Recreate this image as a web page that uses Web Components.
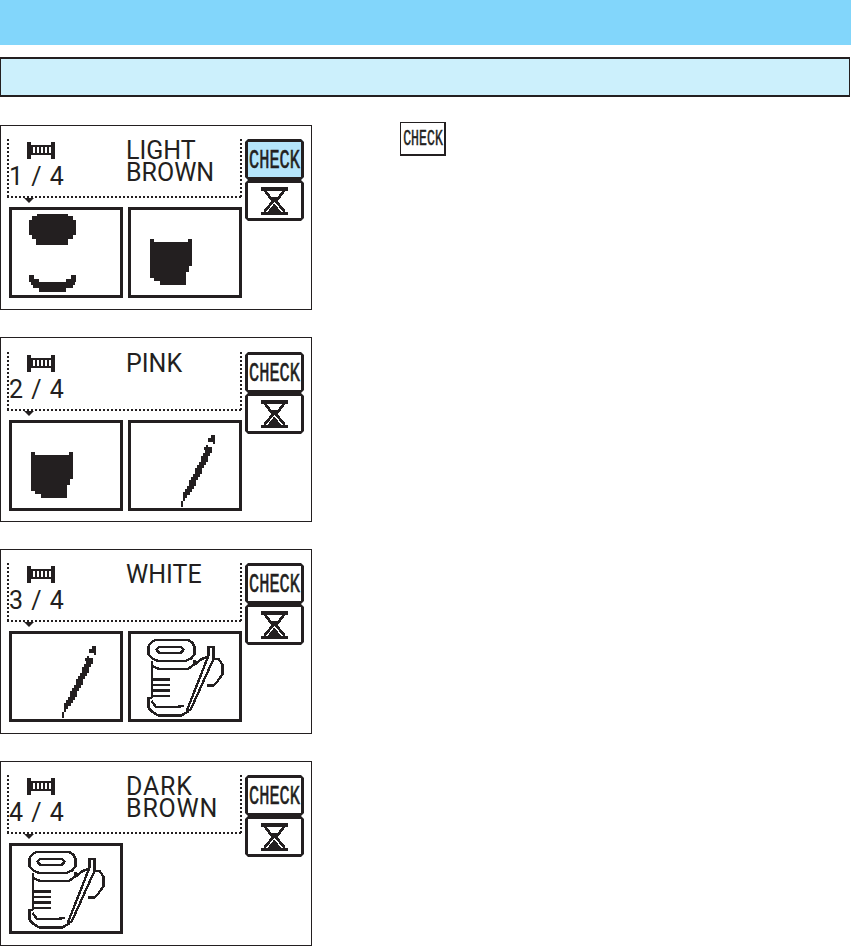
<!DOCTYPE html>
<html lang="en">
<head>
<meta charset="utf-8">
<title>Check</title>
<style>
  html, body { margin: 0; background: #fff; }
</style>
</head>
<body>
<manual-page>
  <check-key slot="hint"></check-key>
  <lcd-panel step="1 / 4" active>
    <span slot="name">LIGHT<br>BROWN</span>
    <thumb-box slot="thumbs" icon="spool-top"></thumb-box>
    <thumb-box slot="thumbs" icon="cup"></thumb-box>
  </lcd-panel>
  <lcd-panel step="2 / 4" style="--top: 14px">
    <span slot="name">PINK</span>
    <thumb-box slot="thumbs" icon="cup"></thumb-box>
    <thumb-box slot="thumbs" icon="needle"></thumb-box>
  </lcd-panel>
  <lcd-panel step="3 / 4">
    <span slot="name">WHITE</span>
    <thumb-box slot="thumbs" icon="needle"></thumb-box>
    <thumb-box slot="thumbs" icon="spool"></thumb-box>
  </lcd-panel>
  <lcd-panel step="4 / 4">
    <span slot="name" style="letter-spacing: .8px">DARK<br>BROWN</span>
    <thumb-box slot="thumbs" icon="spool"></thumb-box>
  </lcd-panel>
</manual-page>

<script>
// pixel art helper: [y0, y1, x0, x1] rows to a path, coords are 3x zoom units
const rowsToPath = (rows, ox, oy) =>
  rows.map(([y0, y1, x0, x1]) =>
    `M${x0 - ox} ${y0 - oy}H${x1 - ox}V${y1 - oy}H${x0 - ox}Z`).join("");

// needle body, snapped to the 6 unit (2px) lcd grid
const needleRows = () => {
  const rows = [[60, 68, 270, 282], [68, 80, 262, 282], [80, 88, 276, 282], [90, 96, 255, 262], [96, 105, 250, 275]];
  for (let y = 105; y < 268; y += 9) {
    const cx = 183 + (262 - y) * 0.5;
    const w = y > 248 ? 6 : y > 232 ? 12 : 21;
    const x0 = Math.round((cx - w / 2) / 6) * 6;
    rows.push([y, y + 9, x0, x0 + w]);
  }
  return rows;
};

const ICONS = {
  "spool-top": `<path fill="#231f20" d="${rowsToPath([
    [282, 290, 110, 205], [290, 300, 97, 218], [300, 345, 88, 228],
    [345, 358, 97, 218], [358, 375, 108, 205],
    [465, 478, 88, 103], [465, 478, 213, 228],
    [478, 488, 88, 118], [478, 488, 198, 228],
    [488, 497, 92, 225], [497, 506, 100, 218], [506, 516, 118, 198],
  ], 36, 271)}"/>`,
  cup: `<path fill="#231f20" d="${rowsToPath([
    [357, 366, 450, 462], [357, 366, 564, 576], [366, 440, 450, 576],
    [440, 458, 450, 567], [458, 475, 450, 558], [475, 485, 462, 558],
    [485, 495, 480, 558],
  ], 393, 271)}"/>`,
  needle: `<path fill="#231f20" d="${rowsToPath(needleRows(), 31, 24)}"/>`,
  spool: `<g transform="translate(42 6)" fill="none" stroke="#231f20" stroke-width="7">
    <path d="M30 12H130L142 20L148 32V55L138 68L120 75H40L22 68L10 55V32L18 20Z"/>
    <path d="M42 32H108L116 41L108 50H42L34 41Z"/>
    <path d="M20 75V185M22 90L40 98H130L148 85V72"/>
    <path d="M22 130H75M22 147H75M22 163H75M22 180H75"/>
    <path d="M20 185H10V215L22 228L40 238H110L132 225"/>
    <path d="M20 195L32 212H100L118 210"/>
    <path d="M190 60L125 225M205 70L135 225"/>
    <path d="M190 60V32H205V68"/>
    <path d="M150 85L165 72L190 60M205 68H220L232 85V115L218 135L205 148H185"/>
  </g>`,
};

class ManualPage extends HTMLElement {
  connectedCallback() {
    this.attachShadow({ mode: "open" });
    this.shadowRoot.innerHTML = `
      <style>
        :host { display: block; width: 851px; height: 946px; overflow: hidden; background: #fff; }
        .band { height: 45px; background: #82d6fb; }
        .sub { height: 40px; box-sizing: border-box; margin: 12px 1px 0 0; background: #ccf0fc; border: 2px solid #231f20; border-width: 2px 1px 2px 1px; }
        .main { display: flex; }
        .panels { width: 312px; padding-top: 28px; display: flex; flex-direction: column; gap: 27px; }
        .hint { padding: 25px 0 0 88px; }
      </style>
      <div class="band"></div>
      <div class="sub"></div>
      <div class="main">
        <div class="panels"><slot></slot></div>
        <div class="hint"><slot name="hint"></slot></div>
      </div>
    `;
  }
}

class LcdPanel extends HTMLElement {
  connectedCallback() {
    const step = this.getAttribute("step") || "";
    const active = this.hasAttribute("active");
    this.attachShadow({ mode: "open" });
    this.shadowRoot.innerHTML = `
      <style>
        :host {
          display: flex; box-sizing: border-box; width: 312px; height: 185px;
          padding: var(--top, 13px) 0 0 6px; border: 1px solid #231f20;
          color: #231f20; font: 25px/22px Roboto, "Liberation Sans", sans-serif;
        }
        .left { width: 235px; }
        .info {
          position: relative; box-sizing: border-box; height: 59px; padding: 1px 2px 0 2px;
          display: grid; grid-template-columns: 117px 1fr;
          background:
            repeating-linear-gradient(to bottom, #231f20 0 2px, transparent 2px 4px) left top / 2px 100% no-repeat,
            repeating-linear-gradient(to bottom, #231f20 0 2px, transparent 2px 4px) right top / 2px 100% no-repeat,
            repeating-linear-gradient(to right, #231f20 0 2px, transparent 2px 4px) left bottom / 100% 2px no-repeat;
        }
        .info::after {
          content: ""; position: absolute; left: 17px; bottom: -5px;
          border: 5px solid transparent; border-top: 5px solid #231f20; border-bottom: 0;
        }
        .reel { display: block; width: 28px; height: 17px; margin: 2px 0 8px 18px; }
        .step { line-height: 19px; word-spacing: 2px; white-space: nowrap; }
        .thumbs { display: flex; gap: 5px; margin: 9px 0 0 2px; }
        .side { margin-left: 3px; display: flex; flex-direction: column; }
        .key {
          box-sizing: border-box; width: 59px; height: 41px; border: 3px solid #231f20;
          clip-path: polygon(3px 0, calc(100% - 3px) 0, 100% 3px, 100% calc(100% - 3px), calc(100% - 3px) 100%, 3px 100%, 0 calc(100% - 3px), 0 3px);
          display: flex; align-items: center; justify-content: center; overflow: hidden;
        }
        .key.on { background: #b5e5fb; }
        .check { display: inline-block; margin-top: 3px; font: 400 27px/1 "Liberation Mono", monospace; -webkit-text-stroke: .6px #231f20; transform: scaleX(.63); }
        .key svg { display: block; width: 27px; height: 28px; }
      </style>
      <div class="left">
        <div class="info">
          <div>
            <svg class="reel" viewBox="0 0 84 51" shape-rendering="crispEdges">
              <path fill="#231f20" d="M0 0H12V51H0ZM72 0H84V51H72ZM12 9H72V15H12ZM12 33H72V39H12ZM12 15H18V33H12ZM24 15H30V33H24ZM36 15H42V33H36ZM48 15H54V33H48ZM60 15H66V33H60Z"/>
            </svg>
            <div class="step">${step}</div>
          </div>
          <div class="name"><slot name="name"></slot></div>
        </div>
        <div class="thumbs"><slot name="thumbs"></slot></div>
      </div>
      <div class="side">
        <div class="key ${active ? "on" : ""}"><span class="check">CHECK</span></div>
        <div class="key">
          <svg viewBox="0 0 81 82" shape-rendering="crispEdges">
            <path fill="#231f20" d="M0 0H81V10H0ZM0 73H81V82H0ZM28 28H53L40 44ZM40 48L60 73H20Z"/>
            <path fill="none" stroke="#231f20" stroke-width="8" d="M12 10L36 42L10 73M69 10L45 42L71 73"/>
          </svg>
        </div>
      </div>
    `;
  }
}

class ThumbBox extends HTMLElement {
  connectedCallback() {
    const icon = this.getAttribute("icon");
    this.attachShadow({ mode: "open" });
    this.shadowRoot.innerHTML = `
      <style>
        :host { display: block; box-sizing: border-box; width: 114px; height: 91px; border: 3px solid #231f20; }
        svg { display: block; width: 108px; height: 85px; }
      </style>
      <svg viewBox="0 0 324 255" shape-rendering="crispEdges">${ICONS[icon] || ""}</svg>
    `;
  }
}

class CheckKey extends HTMLElement {
  connectedCallback() {
    this.attachShadow({ mode: "open" });
    this.shadowRoot.innerHTML = `
      <style>
        :host {
          display: flex; align-items: center; justify-content: center; overflow: hidden;
          box-sizing: border-box; width: 46px; height: 34px;
          border: 1px solid #231f20; border-right-width: 2px; border-bottom-width: 2px;
          color: #231f20;
        }
        span { display: inline-block; margin-top: 3px; font: 400 22px/1 "Liberation Mono", monospace; -webkit-text-stroke: .5px #231f20; transform: scaleX(.6); }
      </style>
      <span>CHECK</span>
    `;
  }
}

customElements.define("manual-page", ManualPage);
customElements.define("lcd-panel", LcdPanel);
customElements.define("thumb-box", ThumbBox);
customElements.define("check-key", CheckKey);
</script>
</body>
</html>
